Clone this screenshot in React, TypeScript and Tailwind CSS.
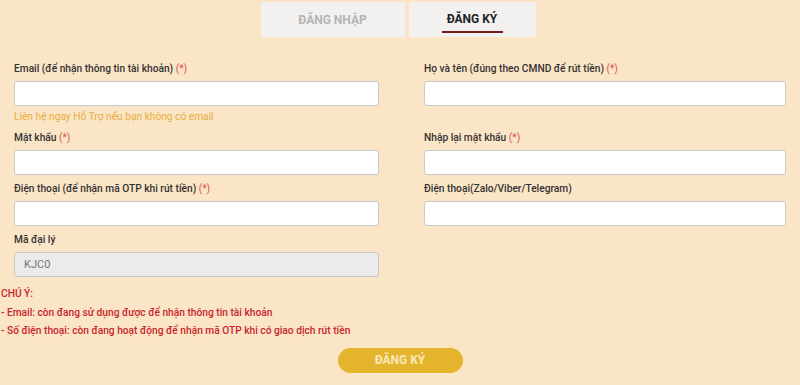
import React from "react";

const font = { fontFamily: "Roboto, 'Noto Sans', sans-serif" };

function Field({
    label,
    required,
    value,
    disabled,
    hint,
}: {
    label: string;
    required?: boolean;
    value?: string;
    disabled?: boolean;
    hint?: string;
}) {
    return (
        <div className="flex flex-col">
            <div className="text-[10.2px] leading-[14px] font-medium text-[#333] mb-[5px]">
                {label}
                {required && <span className="font-normal text-[#d9534f]"> (*)</span>}
            </div>
            <input
                readOnly
                value={value ?? ""}
                className={
                    disabled
                        ? "h-[25px] w-full rounded-[3px] border border-[#c9c9c9] bg-[#ebebeb] px-[9px] text-[11px] text-[#777] outline-none"
                        : "h-[25px] w-full rounded-[3px] border border-[#c9c9c9] bg-white px-[9px] text-[11px] outline-none"
                }
                style={font}
            />
            {hint && (
                <div className="mt-[4px] text-[10.2px] leading-[14px] text-[#e7ad3e]">{hint}</div>
            )}
        </div>
    );
}

export default function App() {
    return (
        <div
            className="w-[800px] h-[385px] overflow-hidden bg-[#fbe5c7]"
            style={font}
        >
            {/* Tabs */}
            <div className="flex justify-center gap-[4px] pt-[2px] pr-[4px]">
                <div className="w-[144px] h-[35px] bg-[#f2f1ef] flex items-center justify-center text-[12px] font-bold text-[#b4b4b4]">
                    ĐĂNG NHẬP
                </div>
                <div className="w-[127px] h-[35px] bg-[#f2f1ef] flex items-center justify-center relative text-[12px] font-bold text-[#222]">
                    <span className="-mt-[2px]">ĐĂNG KÝ</span>
                    <span className="absolute left-[33px] right-[33px] top-[29px] h-[2px] bg-[#7a1818]" />
                </div>
            </div>

            {/* Form */}
            <div className="grid grid-cols-[365px_362px] gap-x-[45px] gap-y-[7px] pl-[14px] pr-[14px] mt-[25px]">
                <Field
                    label="Email (để nhận thông tin tài khoản)"
                    required
                    hint="Liên hệ ngay Hỗ Trợ nếu bạn không có email"
                />
                <Field label="Họ và tên (đúng theo CMND để rút tiền)" required />
                <Field label="Mật khẩu" required />
                <Field label="Nhập lại mật khẩu" required />
                <Field label="Điện thoại (để nhận mã OTP khi rút tiền)" required />
                <Field label="Điện thoại(Zalo/Viber/Telegram)" />
                <Field label="Mã đại lý" value="KJC0" disabled />
            </div>

            {/* Notes */}
            <div className="mt-[8px] pl-[1px] text-[10.2px] leading-[18.5px] font-medium text-[#c8262c]">
                <div>CHÚ Ý:</div>
                <div>- Email: còn đang sử dụng được để nhận thông tin tài khoản</div>
                <div>- Số điện thoại: còn đang hoạt động để nhận mã OTP khi có giao dịch rút tiền</div>
            </div>

            <div className="flex justify-center mt-[7px]">
                <button className="w-[125px] h-[25px] rounded-full bg-[#e4b52c] text-[12px] font-bold text-[#fbe8b8]">
                    ĐĂNG KÝ
                </button>
            </div>
        </div>
    );
}
